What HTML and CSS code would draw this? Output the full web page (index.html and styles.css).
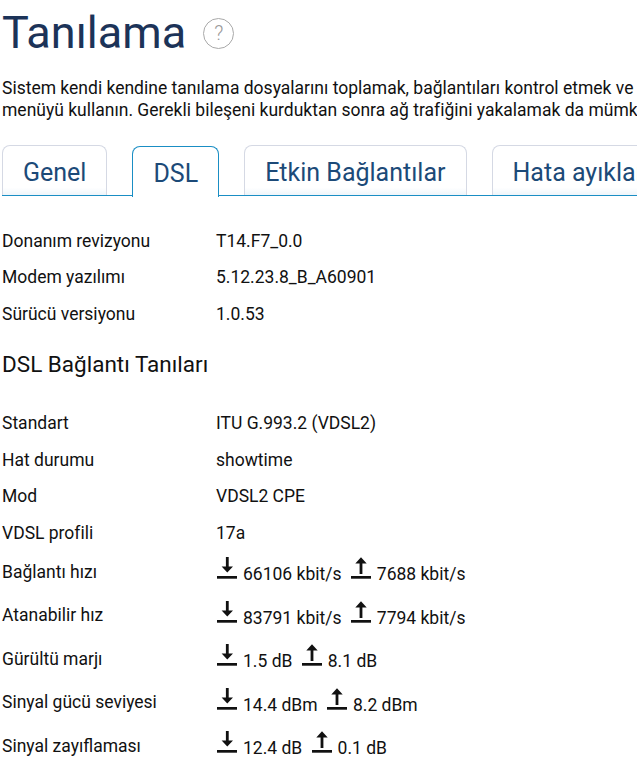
FILE: index.html
```html
<!DOCTYPE html>
<html lang="tr">
<head>
    <meta charset="UTF-8">
    <title>Tanılama</title>
    <link rel="stylesheet" href="styles.css">
</head>
<body>
    <svg class="icon-defs" width="0" height="0" aria-hidden="true">
        <symbol id="icon-down" viewBox="0 0 22 24">
            <path d="M1 20h20v2.700H1z"/>
            <path d="M9.900 1h2.800v9.500h4.300l-5.700 6-5.700-6h4.300z"/>
        </symbol>
        <symbol id="icon-up" viewBox="0 0 22 24">
            <path d="M1 20h20v2.700H1z"/>
            <path d="M9.600 18h2.800V7.500h4.300L11 1.200 5.300 7.500h4.300z"/>
        </symbol>
    </svg>

    <header class="page-head">
        <h1>Tanılama</h1>
        <span class="help">?</span>
    </header>

    <p class="intro">Sistem kendi kendine tanılama dosyalarını toplamak, bağlantıları kontrol etmek ve<br>menüyü kullanın. Gerekli bileşeni kurduktan sonra ağ trafiğini yakalamak da mümkün</p>

    <nav class="tabs">
        <a class="tab">Genel</a>
        <a class="tab active">DSL</a>
        <a class="tab">Etkin Bağlantılar</a>
        <a class="tab">Hata ayıklama</a>
    </nav>

    <section class="info">
        <div class="row"><span class="label">Donanım revizyonu</span><span class="value">T14.F7_0.0</span></div>
        <div class="row"><span class="label">Modem yazılımı</span><span class="value">5.12.23.8_B_A60901</span></div>
        <div class="row"><span class="label">Sürücü versiyonu</span><span class="value">1.0.53</span></div>
    </section>

    <h2>DSL Bağlantı Tanıları</h2>

    <section class="info">
        <div class="row"><span class="label">Standart</span><span class="value">ITU G.993.2 (VDSL2)</span></div>
        <div class="row"><span class="label">Hat durumu</span><span class="value">showtime</span></div>
        <div class="row"><span class="label">Mod</span><span class="value">VDSL2 CPE</span></div>
        <div class="row"><span class="label">VDSL profili</span><span class="value">17a</span></div>
    </section>

    <section class="info rates">
        <div class="row">
            <span class="label">Bağlantı hızı</span>
            <span class="value">
                <svg class="arrow"><use href="#icon-down"/></svg><span class="num">66106 kbit/s</span>
                <svg class="arrow"><use href="#icon-up"/></svg><span class="num">7688 kbit/s</span>
            </span>
        </div>
        <div class="row">
            <span class="label">Atanabilir hız</span>
            <span class="value">
                <svg class="arrow"><use href="#icon-down"/></svg><span class="num">83791 kbit/s</span>
                <svg class="arrow"><use href="#icon-up"/></svg><span class="num">7794 kbit/s</span>
            </span>
        </div>
        <div class="row">
            <span class="label">Gürültü marjı</span>
            <span class="value">
                <svg class="arrow"><use href="#icon-down"/></svg><span class="num">1.5 dB</span>
                <svg class="arrow"><use href="#icon-up"/></svg><span class="num">8.1 dB</span>
            </span>
        </div>
        <div class="row">
            <span class="label">Sinyal gücü seviyesi</span>
            <span class="value">
                <svg class="arrow"><use href="#icon-down"/></svg><span class="num">14.4 dBm</span>
                <svg class="arrow"><use href="#icon-up"/></svg><span class="num">8.2 dBm</span>
            </span>
        </div>
        <div class="row">
            <span class="label">Sinyal zayıflaması</span>
            <span class="value">
                <svg class="arrow"><use href="#icon-down"/></svg><span class="num">12.4 dB</span>
                <svg class="arrow"><use href="#icon-up"/></svg><span class="num">0.1 dB</span>
            </span>
        </div>
    </section>
</body>
</html>
```

FILE: styles.css
```css
html, body {
    height: 762px;
    overflow: hidden;
}

body {
    margin: 0;
    padding: 0 0 0 2px;
    font-family: Roboto, Arial, sans-serif;
    font-size: 17.5px;
    color: #111;
    background-color: #fff;
}

.icon-defs {
    position: absolute;
}

.page-head {
    display: flex;
    align-items: center;
    height: 66px;
}

.page-head h1 {
    margin: 0;
    font-size: 45px;
    font-weight: 400;
    line-height: 66px;
    color: #1c3358;
}

.help {
    box-sizing: border-box;
    width: 31px;
    height: 31px;
    margin-left: 17px;
    border: 1.5px solid #a9a9a9;
    border-radius: 50%;
    text-align: center;
    line-height: 28px;
    font-size: 20px;
    font-weight: 300;
    color: #999;
}

.intro {
    margin: 11px 0 0;
    line-height: 22px;
    white-space: nowrap;
}

.tabs {
    display: flex;
    gap: 25px;
    width: 635px;
    height: 50px;
    margin-top: 24px;
    border-bottom: 1px solid #1a8ec4;
    white-space: nowrap;
}

.tab {
    flex: none;
    height: 49px;
    padding: 0 20px;
    border: 1px solid #d5d9e4;
    border-bottom: none;
    border-radius: 8px 8px 0 0;
    background: linear-gradient(to bottom, #fff 85%, #eef5fa);
    font-size: 25px;
    line-height: 53px;
    color: #1c4a78;
}

.tab.active {
    height: 50px;
    margin-top: 1px;
    border-color: #1a8ec4;
    background: #fff;
}

.info {
    margin-top: 26.7px;
}

.row {
    display: flex;
    height: 36.5px;
    line-height: 36.5px;
    white-space: nowrap;
}

.label {
    flex: none;
    width: 214px;
}

.rates {
    margin-top: 0.4px;
}

.rates .row {
    height: 43.5px;
    line-height: 47px;
}

.rates .label {
    position: relative;
    top: -2.8px;
}

.arrow {
    width: 22px;
    height: 24px;
    fill: #111;
}

.num {
    margin: 0 4px 0 5px;
}

h2 {
    height: 30px;
    margin: 16.15px 0 21px;
    font-size: 22.5px;
    font-weight: 400;
    line-height: 32px;
    color: #111;
}
```
